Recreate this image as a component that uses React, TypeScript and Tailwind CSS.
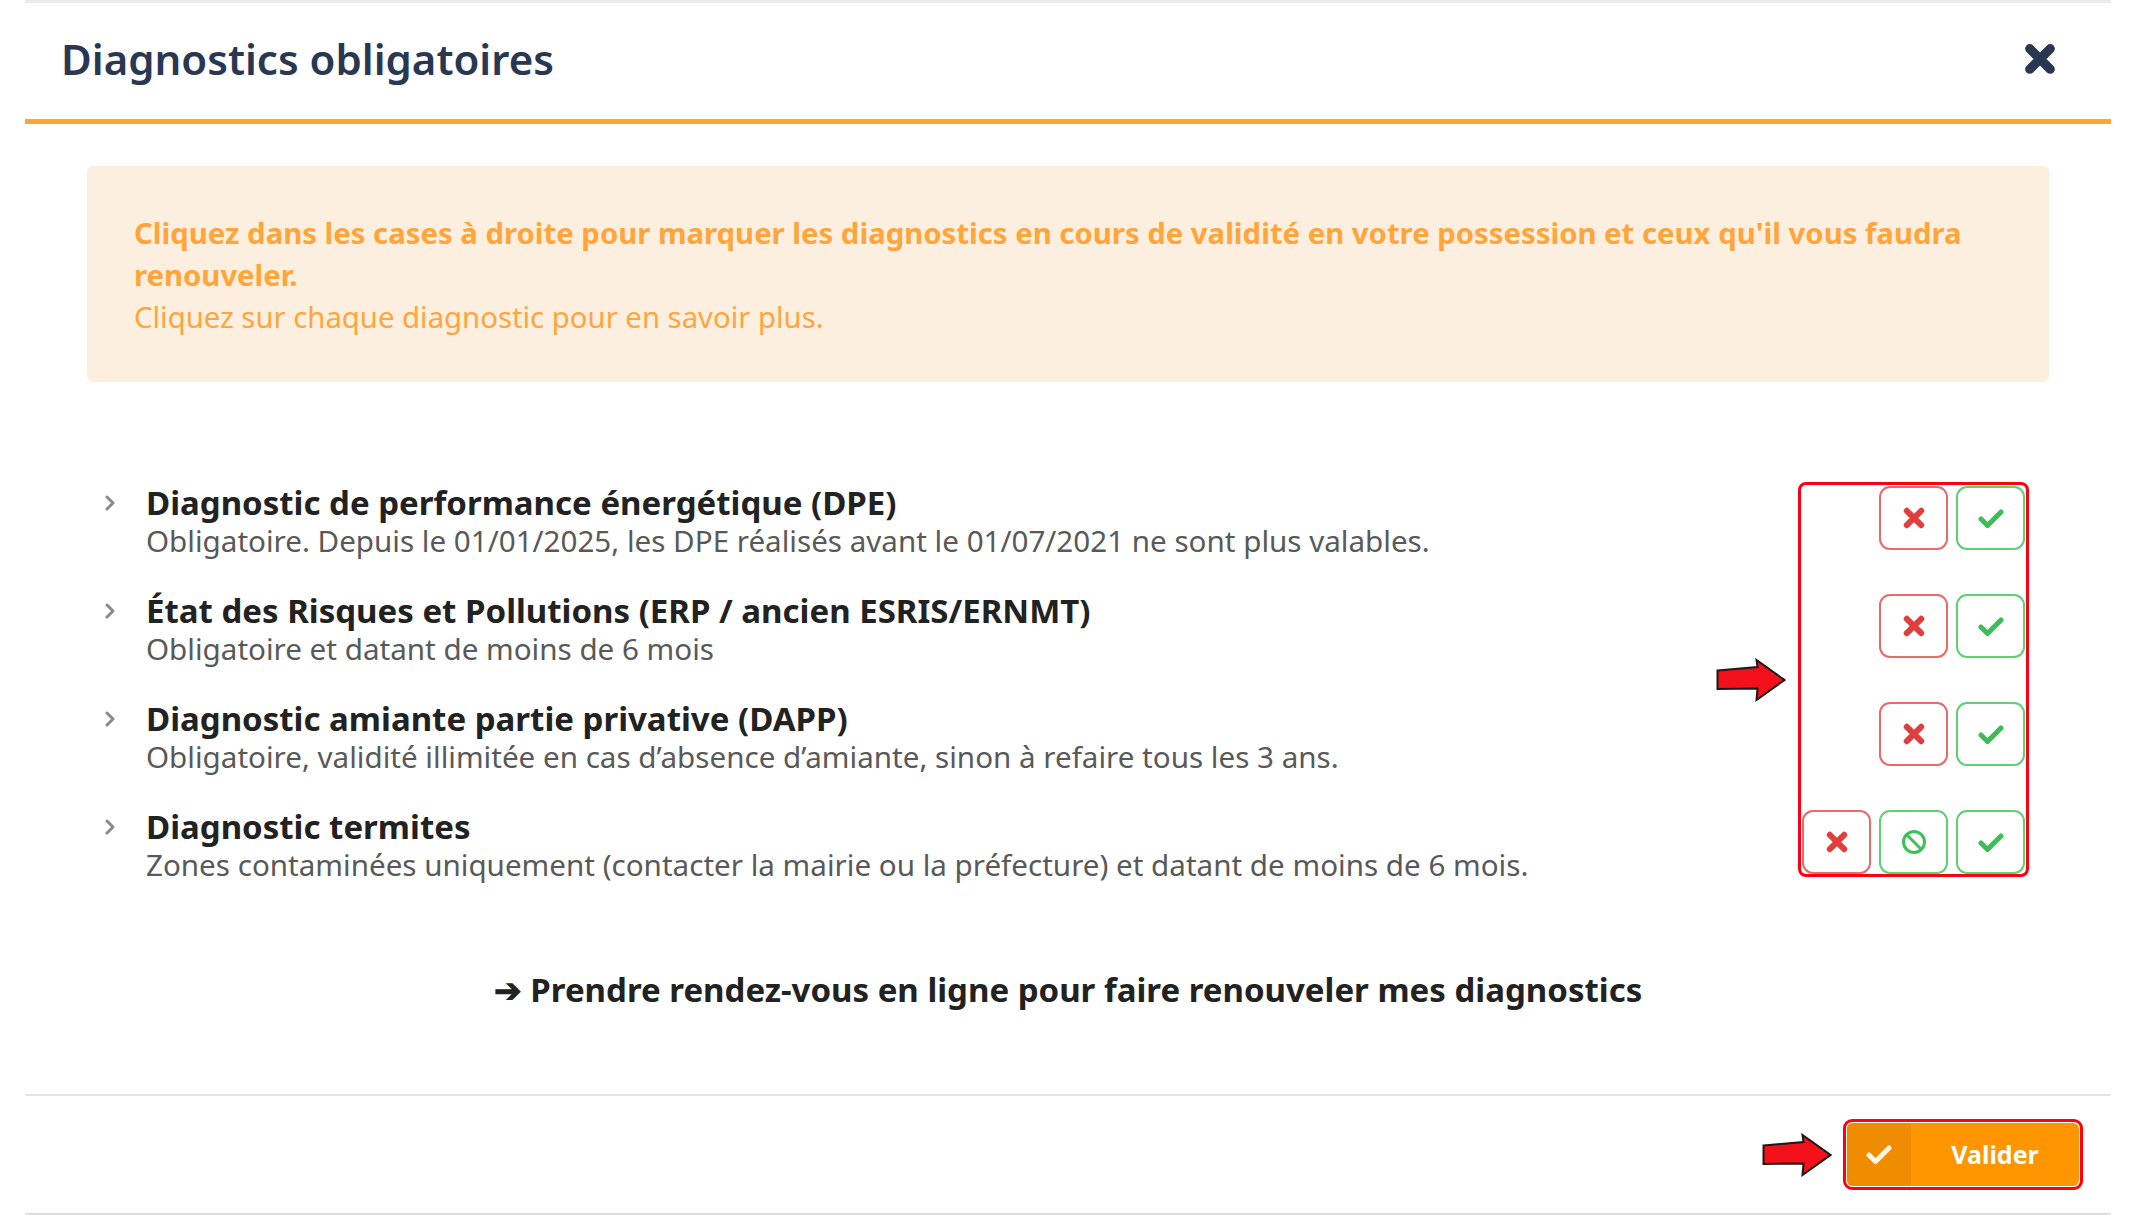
import React from "react";

type Item = { title: string; desc: string; ban?: boolean };

const items: Item[] = [
  {
    title: "Diagnostic de performance énergétique (DPE)",
    desc: "Obligatoire. Depuis le 01/01/2025, les DPE réalisés avant le 01/07/2021 ne sont plus valables.",
  },
  {
    title: "État des Risques et Pollutions (ERP / ancien ESRIS/ERNMT)",
    desc: "Obligatoire et datant de moins de 6 mois",
  },
  {
    title: "Diagnostic amiante partie privative (DAPP)",
    desc: "Obligatoire, validité illimitée en cas d’absence d’amiante, sinon à refaire tous les 3 ans.",
  },
  {
    title: "Diagnostic termites",
    desc: "Zones contaminées uniquement (contacter la mairie ou la préfecture) et datant de moins de 6 mois.",
    ban: true,
  },
];

const Chevron = () => (
  <svg width="10" height="16" viewBox="0 0 10 16" fill="none">
    <path d="M2 2l6 6-6 6" stroke="#8a8a8a" strokeWidth="3" strokeLinecap="round" strokeLinejoin="round" />
  </svg>
);

const Times = ({ size, color, width }: { size: number; color: string; width: number }) => (
  <svg width={size} height={size} viewBox="0 0 20 20" fill="none">
    <path d="M4 4l12 12M16 4L4 16" stroke={color} strokeWidth={width} strokeLinecap="round" />
  </svg>
);

const Check = ({ color }: { color: string }) => (
  <svg width="28" height="21" viewBox="0 0 28 21" fill="none">
    <path d="M4 11l6.5 6.5L24 4" stroke={color} strokeWidth="5" strokeLinecap="round" strokeLinejoin="round" />
  </svg>
);

const Ban = () => (
  <svg width="26" height="26" viewBox="0 0 26 26" fill="none">
    <circle cx="13" cy="13" r="10.5" stroke="#3fbf5a" strokeWidth="3" />
    <path d="M5.8 5.8l14.4 14.4" stroke="#3fbf5a" strokeWidth="3" />
  </svg>
);

const RedArrow = () => (
  <svg width="70" height="44" viewBox="0 0 70 44">
    <path
      d="M1.5 12.5L41.5 9L40.5 2L68.5 22L40.5 42L41.5 30.5L1.5 31Z"
      fill="#f2111b"
      stroke="#1a1a1a"
      strokeWidth="2"
      strokeLinejoin="miter"
    />
  </svg>
);

const Box = ({ kind, children }: { kind: "no" | "yes"; children: React.ReactNode }) => (
  <div
    className={
      kind === "no"
        ? "flex h-[64px] w-[69px] items-center justify-center rounded-[11px] border-2 border-[#e86a6a] bg-white"
        : "flex h-[64px] w-[69px] items-center justify-center rounded-[11px] border-2 border-[#5fd173] bg-white"
    }
  >
    {children}
  </div>
);

export default function App() {
  return (
    <div className="min-h-screen bg-white font-['Noto_Sans',sans-serif]">
      <div className="mx-[25px] border-t-[3px] border-b-2 border-t-[#ececec] border-b-[#dedede] bg-white">
        <div className="flex h-[121px] items-center justify-between border-b-[5px] border-[#ffa630] pb-[5px] pl-[36px] pr-[54px]">
          <h1 className="text-[42px] font-semibold text-[#2a3753]">Diagnostics obligatoires</h1>
          <Times size={34} color="#2a3753" width={5.5} />
        </div>

        <div className="px-[62px] pt-[42px]">
          <div className="rounded-md bg-[#fdefe0] px-[47px] pb-[44px] pt-[46px] text-[29.3px] leading-[42px] text-[#ffa53b]">
            <p className="font-bold">
              Cliquez dans les cases à droite pour marquer les diagnostics en cours de validité en votre possession et
              ceux qu'il vous faudra renouveler.
            </p>
            <p>Cliquez sur chaque diagnostic pour en savoir plus.</p>
          </div>

          <div className="mt-[100px] flex items-start justify-between pl-[11px] pr-[20px]">
            <div className="flex flex-col gap-[32px] pt-[2px]">
              {items.map((it) => (
                <div key={it.title} className="flex items-start gap-[24px]">
                  <div className="flex h-[38px] w-[24px] items-center justify-center">
                    <Chevron />
                  </div>
                  <div>
                    <div className="text-[33px] font-bold leading-[38px] text-[#222]">{it.title}</div>
                    <div className="text-[29.6px] leading-[38px] text-[#595959]">{it.desc}</div>
                  </div>
                </div>
              ))}
            </div>

            <div className="flex items-center gap-[12px]">
              <RedArrow />
              <div className="flex flex-col gap-[44px] rounded-[8px] border-[3px] border-[#ff0010] px-[1px] pt-[1px]">
                {items.map((it) => (
                  <div key={it.title} className="flex justify-end gap-[8px]">
                    {it.ban && (
                      <Box kind="no">
                        <Times size={24} color="#e23d3d" width={5} />
                      </Box>
                    )}
                    <Box kind={it.ban ? "yes" : "no"}>
                      {it.ban ? <Ban /> : <Times size={24} color="#e23d3d" width={5} />}
                    </Box>
                    <Box kind="yes">
                      <Check color="#39bf55" />
                    </Box>
                  </div>
                ))}
              </div>
            </div>
          </div>

          <p className="pb-[84px] pt-[86px] text-center text-[33px] font-bold leading-[40px] text-[#222]">
            ➔ Prendre rendez-vous en ligne pour faire renouveler mes diagnostics
          </p>
        </div>

        <div className="flex h-[119px] items-center justify-end gap-[11px] border-t-2 border-[#e6e6e6] pr-[28px]">
          <RedArrow />
          <div className="rounded-[9px] border-[3px] border-[#ff0010] p-[1px]">
            <button className="flex h-[63px] w-[232px] overflow-hidden rounded-[6px] bg-[#ff9500] text-white">
              <span className="flex h-full w-[64px] items-center justify-center bg-[#f08c00]">
                <Check color="#fff6e8" />
              </span>
              <span className="flex flex-1 items-center justify-center text-[25px] font-bold">Valider</span>
            </button>
          </div>
        </div>
      </div>
    </div>
  );
}
